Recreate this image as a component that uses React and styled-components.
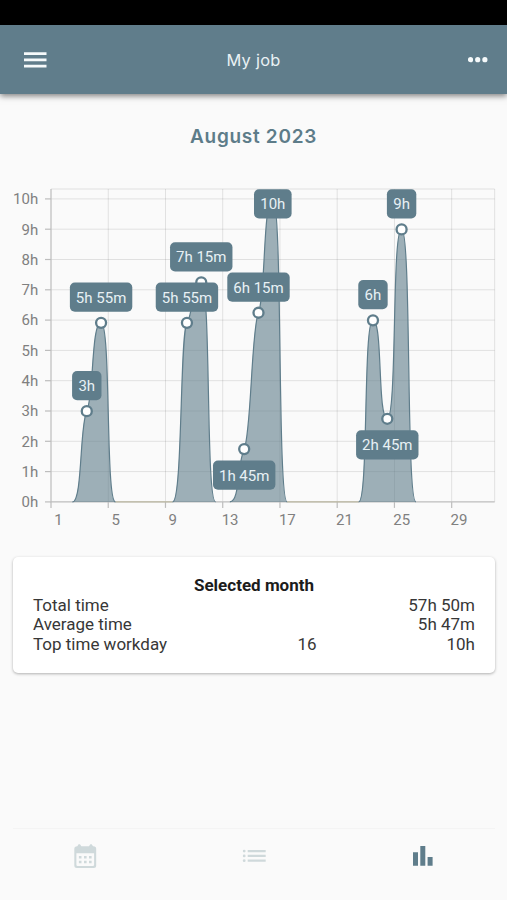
import React from "react";
import styled, { createGlobalStyle } from "styled-components";

const GlobalStyle = createGlobalStyle`
  * { box-sizing: border-box; }
  body { margin: 0; background: #fafafa; }
`;

const Screen = styled.div`
  width: 507px;
  height: 900px;
  display: flex;
  flex-direction: column;
  background: #fafafa;
  font-family: Roboto, sans-serif;
  overflow: hidden;
`;

const StatusBar = styled.div`
  flex: none;
  height: 25px;
  background: #000;
`;

const Toolbar = styled.header`
  flex: none;
  height: 69px;
  padding: 0 19px 0 24px;
  display: grid;
  grid-template-columns: 60px 1fr 60px;
  align-items: center;
  background: #607d8b;
  box-shadow: 0 2px 6px rgba(0, 0, 0, 0.5);
  color: #fff;
`;

const ToolbarIcon = styled.svg`
  display: block;
  justify-self: ${(p) => p.$side};
  fill: #f6fafb;
`;

const Title = styled.h1`
  margin: 0;
  padding-right: 5px;
  text-align: center;
  font: 400 16.4px/24px Inter, sans-serif;
  letter-spacing: 0.25px;
  color: #e9f1f4;
`;

const Month = styled.h2`
  flex: none;
  height: 86px;
  margin: 0;
  text-align: center;
  font: 600 19px/85px Inter, sans-serif;
  letter-spacing: 0.7px;
  color: #5d7c89;
`;

const Chart = styled.svg`
  flex: none;
  display: block;
  width: 507px;
  height: 360px;
`;

const AxisText = styled.text`
  font: 400 15px Roboto, sans-serif;
  fill: #808080;
`;

const TagText = styled.text`
  font: 400 15px Roboto, sans-serif;
  fill: #e8f1f5;
`;

const Card = styled.section`
  flex: none;
  height: 116px;
  margin: 17px 12px 0 13px;
  padding: 19px 20px 0;
  border-radius: 5px;
  background: #fff;
  box-shadow: 0 1px 3px rgba(0, 0, 0, 0.3);
  color: #373737;
  font-size: 17px;
  line-height: 19.6px;
`;

const CardTitle = styled.div`
  text-align: center;
  font-weight: 700;
  color: #1c1c1c;
`;

const Row = styled.div`
  display: grid;
  grid-template-columns: 236px 76px 1fr;
`;

const Cell = styled.span`
  text-align: ${(p) => p.$align || "left"};
`;

const NavDivider = styled.div`
  flex: none;
  height: 1px;
  margin: auto 12px 0 13px;
  background: #f4f4f4;
`;

const BottomNav = styled.nav`
  flex: none;
  height: 71px;
  padding: 14px 0 0 1px;
  display: flex;
`;

const NavItem = styled.div`
  display: flex;
  justify-content: center;
  flex: 1 1 0;
  color: ${(p) => (p.$active ? "#5f7d8b" : "#cfd9db")};
`;

const NavIcon = styled.svg`
  display: block;
  width: 28px;
  height: 28px;
  fill: currentColor;
`;

const LEFT = 51;
const RIGHT = 494.7;
const TOP = 9;
const BASE = 321.9;
const DAY = 14.31;
const HOUR = 30.3;
const dayX = (d) => LEFT + (d - 0.5) * DAY;
const hourY = (h) => BASE - h * HOUR;

/* Each node: day, hours, and slope (pixels risen per pixel across) where the curve passes through. */
const runs = [
  [[2, 0, 0], [3, 3, 2], [4, 5.917, 0], [5, 0, 0]],
  [[9, 0, 0], [10, 5.917, 1.5], [11, 7.25, 0], [12, 0, 0]],
  [[13, 0, 0], [14, 1.75, 2.2], [15, 6.25, 2.2], [16, 10, 0], [17, 0, 0]],
  [[22, 0, 0], [23, 6, 0], [24, 2.75, 0], [25, 9, 0], [26, 0, 0]],
];

const runPath = (run) =>
  run.reduce((path, [day, hours, slope], i) => {
    const x = dayX(day);
    const y = hourY(hours);
    if (i === 0) return `M${x} ${y}`;
    const [pd, ph, ps] = run[i - 1];
    const out = DAY * (ps ? 0.5 : 0.7);
    const into = DAY * (slope ? 0.5 : 0.7);
    return `${path} C${dayX(pd) + out} ${hourY(ph) - ps * out} ${x - into} ${y + slope * into} ${x} ${y}`;
  }, "");

const points = [
  { day: 3, hours: 3, label: "3h" },
  { day: 4, hours: 5.917, label: "5h 55m" },
  { day: 10, hours: 5.917, label: "5h 55m" },
  { day: 11, hours: 7.25, label: "7h 15m" },
  { day: 14, hours: 1.75, label: "1h 45m", below: true },
  { day: 15, hours: 6.25, label: "6h 15m" },
  { day: 16, hours: 10, label: "10h" },
  { day: 23, hours: 6, label: "6h" },
  { day: 24, hours: 2.75, label: "2h 45m", below: true },
  { day: 25, hours: 9, label: "9h" },
];

const tagWidths = { 2: 29.4, 3: 37.6, 6: 62.4 };

function Tag({ day, hours, label, below }) {
  const width = tagWidths[label.length];
  const x = dayX(day);
  const y = Math.max(TOP + 0.2, hourY(hours) + (below ? 11.7 : -40));
  return (
    <g>
      <rect x={x - width / 2} y={y} width={width} height="29.2" rx="5" fill="#5f7d8b" />
      <TagText x={x} y={y + 20} textAnchor="middle">{label}</TagText>
    </g>
  );
}

function HoursChart() {
  const hours = Array.from({ length: 11 }, (_, i) => i);
  const days = [1, 5, 9, 13, 17, 21, 25, 29];
  return (
    <Chart viewBox="0 0 507 360">
      <g stroke="#000" strokeOpacity="0.1">
        <path d={`M${LEFT} ${TOP}H${RIGHT}V${BASE}`} fill="none" />
        {hours.slice(1).map((h) => <path key={h} d={`M${LEFT} ${hourY(h)}H${RIGHT}`} />)}
        {days.slice(1).map((d) => <path key={d} d={`M${LEFT + (d - 1) * DAY} ${TOP}V${BASE}`} />)}
      </g>
      <g stroke="#bdbdbd" strokeWidth="1.2">
        <path d={`M${LEFT} ${TOP}V${BASE}H${RIGHT}`} fill="none" />
        {hours.map((h) => <path key={h} d={`M45 ${hourY(h)}H${LEFT}`} />)}
        {days.map((d) => <path key={d} d={`M${LEFT + (d - 1) * DAY} ${BASE}v6`} />)}
      </g>
      <path d={`M${dayX(5)} ${BASE}H${dayX(9)}M${dayX(17)} ${BASE}H${dayX(22)}`} stroke="#bdb99c" />
      {runs.map((run) => (
        <path key={run[0][0]} d={runPath(run)} fill="#5f7d8b" fillOpacity="0.6" stroke="#5f7d8b" strokeWidth="1.2" />
      ))}
      {hours.map((h) => (
        <AxisText key={h} x="38.2" y={hourY(h) + 5.3} textAnchor="end">{h}h</AxisText>
      ))}
      {days.map((d) => (
        <AxisText key={d} x={dayX(d) + 0.2} y="345.4" textAnchor="middle">{d}</AxisText>
      ))}
      {points.map((p) => (
        <circle key={p.day} cx={dayX(p.day)} cy={hourY(p.hours) + 0.2} r="5" fill="#fff" stroke="#5f7d8b" strokeWidth="2.3" />
      ))}
      {[...points].reverse().map((p) => <Tag key={p.day} {...p} />)}
    </Chart>
  );
}

export default function App() {
  return (
    <Screen>
      <GlobalStyle />
      <StatusBar />
      <Toolbar>
        <ToolbarIcon $side="start" width="23" height="16" viewBox="0 0 23 16">
          <path d="M0 0.3h22.5v2.7H0zM0 6.5h22.5v2.7H0zM0 12.7h22.5v2.7H0z" />
        </ToolbarIcon>
        <Title>My job</Title>
        <ToolbarIcon $side="end" width="20" height="6" viewBox="0 0 20 6">
          <circle cx="2.5" cy="2.7" r="2.6" />
          <circle cx="9.7" cy="2.7" r="2.6" />
          <circle cx="16.9" cy="2.7" r="2.6" />
        </ToolbarIcon>
      </Toolbar>
      <Month>August 2023</Month>
      <HoursChart />
      <Card>
        <CardTitle>Selected month</CardTitle>
        <Row>
          <Cell>Total time</Cell>
          <Cell />
          <Cell $align="right">57h 50m</Cell>
        </Row>
        <Row>
          <Cell>Average time</Cell>
          <Cell />
          <Cell $align="right">5h 47m</Cell>
        </Row>
        <Row>
          <Cell>Top time workday</Cell>
          <Cell $align="center">16</Cell>
          <Cell $align="right">10h</Cell>
        </Row>
      </Card>
      <NavDivider />
      <BottomNav>
        <NavItem>
          <NavIcon viewBox="0 0 28 28">
            <path fillRule="evenodd" d="M6.3 3.2L7.6 1.2H9L10.3 3.2H18L19.3 1.2H20.7L22 3.2Q25.2 3 25.2 6V22.5Q25.2 25 22.7 25H5.8Q3.3 25 3.3 22.5V6Q3.3 3.2 6.3 3.2zM5.4 10.3V21.7Q5.4 22.9 6.6 22.9H21.9Q23.1 22.9 23.1 21.7V10.3z" />
            <path d="M7.9 13h2.6v2.5H7.9zM13 13h2.6v2.5H13zM18 13h2.6v2.5H18zM7.9 17.8h2.6v2.5H7.9zM13 17.8h2.6v2.5H13zM18 17.8h2.6v2.5H18z" />
          </NavIcon>
        </NavItem>
        <NavItem>
          <NavIcon viewBox="0 0 28 28">
            <path d="M7.7 7h18v2.2h-18zM7.7 11.8h18V14h-18zM7.7 16.6h18v2.2h-18z" />
            <circle cx="4.2" cy="8.1" r="1.4" />
            <circle cx="4.2" cy="12.9" r="1.4" />
            <circle cx="4.2" cy="17.7" r="1.4" />
          </NavIcon>
        </NavItem>
        <NavItem $active>
          <NavIcon viewBox="0 0 28 28">
            <path d="M4 9.2h5v13.6H4zM11.3 3h5v19.8h-5zM18.6 14h5v8.8h-5z" />
          </NavIcon>
        </NavItem>
      </BottomNav>
    </Screen>
  );
}
